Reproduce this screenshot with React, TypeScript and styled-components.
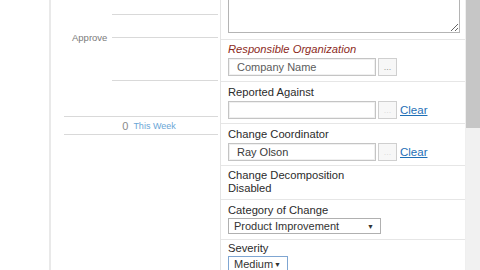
import React from "react";
import styled, { createGlobalStyle } from "styled-components";

const Global = createGlobalStyle`
  html, body { margin: 0; padding: 0; background: #fff; overflow: hidden; }
  body { font-family: "Liberation Sans", Arial, sans-serif; }
`;

const Page = styled.div`
  display: flex;
  width: 480px;
  height: 270px;
  overflow: hidden;
  background: #fff;
`;

const LeftPane = styled.div`
  width: 220px;
  display: flex;
  flex-shrink: 0;
`;

const Gutter = styled.div`
  width: 49px;
`;

const VRule = styled.div`
  width: 2px;
  background: #e9e9e9;
`;

const LeftContent = styled.div`
  flex: 1;
  display: flex;
  flex-direction: column;
`;

const RuleBlock = styled.div<{ $h: number; $indent: number }>`
  height: ${(p) => p.$h}px;
  margin-left: ${(p) => p.$indent}px;
  margin-right: 2px;
  border-bottom: 1px solid #d9d9d9;
`;

const ApproveRow = styled.div`
  height: 44px;
  display: flex;
  align-items: center;
  margin-right: 2px;
`;

const ApproveLabel = styled.div`
  padding-left: 21px;
  box-sizing: border-box;
  width: 61px;
  font-size: 9.5px;
  color: #7a7a7a;
`;

const ApproveLine = styled.div`
  flex: 1;
  border-top: 1px solid #d9d9d9;
`;

const WeekRow = styled.div`
  height: 17px;
  margin-left: 13px;
  margin-right: 2px;
  border-bottom: 1px solid #d9d9d9;
  display: flex;
  align-items: center;
  justify-content: center;
  padding-left: 16px;
  gap: 5px;
`;

const WeekCount = styled.span`
  font-size: 11px;
  color: #8a8a8a;
`;

const WeekLink = styled.span`
  font-size: 9px;
  color: #6aa6d6;
`;

const RightPane = styled.div`
  width: 246px;
  flex-shrink: 0;
  border-left: 1px solid #e4e4e4;
  border-right: 1px solid #efefef;
  box-sizing: border-box;
  overflow: hidden;
`;

const Form = styled.div`
  margin-top: -20px;
  display: flex;
  flex-direction: column;
`;

const Section = styled.div<{ $pt: number; $pb: number }>`
  padding: ${(p) => p.$pt}px 0 ${(p) => p.$pb}px 7px;
  border-bottom: 1px solid #e6e6e6;
  display: flex;
  flex-direction: column;
  &:last-child { border-bottom: none; }
`;

const Notes = styled.textarea`
  width: 232px;
  height: 53px;
  box-sizing: border-box;
  border: 1px solid #b4b4b4;
  margin: 0;
  padding: 2px;
  display: block;
  resize: both;
  font-family: inherit;
`;

const Label = styled.div<{ $required?: boolean; $lh?: number }>`
  font-size: 11.2px;
  line-height: ${(p) => p.$lh ?? 14}px;
  color: ${(p) => (p.$required ? "#8c2a1c" : "#2b2b2b")};
  font-style: ${(p) => (p.$required ? "italic" : "normal")};
`;

const FieldRow = styled.div<{ $mt: number }>`
  display: flex;
  align-items: center;
  margin-top: ${(p) => p.$mt}px;
  gap: 2px;
`;

const TextBox = styled.div<{ $muted?: boolean }>`
  width: 148px;
  height: 18px;
  box-sizing: border-box;
  border: 1px solid #c4c4c4;
  box-shadow: inset 0 0 0 1px #f0f0f0;
  padding-left: 8px;
  font-size: 11px;
  line-height: 16px;
  color: ${(p) => (p.$muted ? "#5c5c5c" : "#3a3a3a")};
  background: #fff;
`;

const PickButton = styled.div<{ $faded?: boolean }>`
  width: 19px;
  height: 18px;
  box-sizing: border-box;
  border: 1px solid #cfcfcf;
  background: #f7f7f7;
  font-size: 9px;
  line-height: 17px;
  text-align: center;
  color: ${(p) => (p.$faded ? "#dcdcdc" : "#9a9a9a")};
`;

const ClearLink = styled.a`
  font-size: 11.5px;
  color: #1f6fb6;
  text-decoration: underline;
  margin-left: 1px;
  cursor: pointer;
`;

const FakeSelect = styled.div<{ $w: number; $focus?: boolean }>`
  width: ${(p) => p.$w}px;
  height: 16px;
  box-sizing: border-box;
  border: 1px solid ${(p) => (p.$focus ? "#7fa6d2" : "#b0b0b0")};
  background: #fff;
  display: flex;
  align-items: center;
  justify-content: space-between;
  padding: 0 6px 0 5px;
  font-size: 11px;
  color: #333;
`;

const Arrow = styled.span`
  font-size: 7px;
  color: #333;
`;

const Scrollbar = styled.div`
  width: 14px;
  flex-shrink: 0;
  background: #f1f1f1;
  display: flex;
  flex-direction: column;
`;

const Thumb = styled.div`
  height: 128px;
  background: #c6c6c6;
`;

export default function App() {
  return (
    <>
      <Global />
      <Page>
        <LeftPane>
          <Gutter />
          <VRule />
          <LeftContent>
            <RuleBlock $h={14} $indent={61} />
            <ApproveRow>
              <ApproveLabel>Approve</ApproveLabel>
              <ApproveLine />
            </ApproveRow>
            <RuleBlock $h={21} $indent={61} />
            <RuleBlock $h={35} $indent={13} />
            <WeekRow>
              <WeekCount>0</WeekCount>
              <WeekLink>This Week</WeekLink>
            </WeekRow>
          </LeftContent>
        </LeftPane>
        <RightPane>
          <Form>
            <Section $pt={0} $pb={6}>
              <Notes readOnly defaultValue="" />
            </Section>
            <Section $pt={2} $pb={5}>
              <Label $required>Responsible Organization</Label>
              <FieldRow $mt={2}>
                <TextBox $muted>Company Name</TextBox>
                <PickButton>...</PickButton>
              </FieldRow>
            </Section>
            <Section $pt={3} $pb={4}>
              <Label>Reported Against</Label>
              <FieldRow $mt={2}>
                <TextBox />
                <PickButton $faded>...</PickButton>
                <ClearLink>Clear</ClearLink>
              </FieldRow>
            </Section>
            <Section $pt={3} $pb={4}>
              <Label>Change Coordinator</Label>
              <FieldRow $mt={2}>
                <TextBox>Ray Olson</TextBox>
                <PickButton $faded>...</PickButton>
                <ClearLink>Clear</ClearLink>
              </FieldRow>
            </Section>
            <Section $pt={3} $pb={4}>
              <Label $lh={13}>Change Decomposition</Label>
              <Label $lh={13}>Disabled</Label>
            </Section>
            <Section $pt={3} $pb={5}>
              <Label>Category of Change</Label>
              <FieldRow $mt={1}>
                <FakeSelect $w={153}>
                  <span>Product Improvement</span>
                  <Arrow>▼</Arrow>
                </FakeSelect>
              </FieldRow>
            </Section>
            <Section $pt={1} $pb={4}>
              <Label>Severity</Label>
              <FieldRow $mt={1}>
                <FakeSelect $w={60} $focus>
                  <span>Medium</span>
                  <Arrow>▼</Arrow>
                </FakeSelect>
              </FieldRow>
            </Section>
          </Form>
        </RightPane>
        <Scrollbar>
          <Thumb />
        </Scrollbar>
      </Page>
    </>
  );
}
